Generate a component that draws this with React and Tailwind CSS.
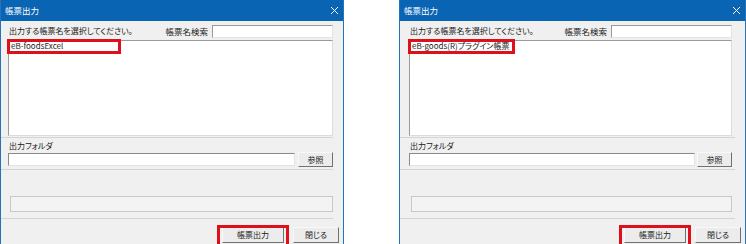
import React from "react";

const font = { fontFamily: '"Noto Sans CJK JP", "Noto Sans", sans-serif' };

function Dialog({ width, item, itemBoxW, folderW, padL, padR }) {
  return (
    <div
      className="flex flex-col h-[244px] bg-[#f0f0f0] border-l border-r border-[#2a72b8] [font-feature-settings:'palt'] text-[8px] leading-none text-[#1a1a1a]"
      style={{ ...font, width }}
    >
      <div className="h-[21px] bg-[#0a64b4] flex items-center justify-between pl-[4px] pr-[4px] text-white shrink-0">
        <span className="text-[8.5px]">帳票出力</span>
        <svg width="9" height="9" viewBox="0 0 9 9">
          <path d="M1 1 L8 8 M8 1 L1 8" stroke="white" strokeWidth="1" />
        </svg>
      </div>
      <div className="flex flex-col" style={{ paddingLeft: padL, paddingRight: padR }}>
        <div className="flex items-center justify-between mt-[3px] h-[14px]">
          <span className="pl-[1px]">出力する帳票名を選択してください。</span>
          <div className="flex items-center gap-[4px]">
            <span className="text-[8.5px]">帳票名検索</span>
            <div className="w-[121px] h-[13px] bg-white border border-[#9a9a9a] border-b-[#e3e3e3] border-r-[#e3e3e3]" />
          </div>
        </div>
        <div className="relative mt-[2px] h-[96px] bg-white border border-[#9a9a9a] border-b-[#dcdcdc] border-r-[#dcdcdc]">
          <div className="pl-[2px] h-[9px] leading-[9px] whitespace-nowrap">{item}</div>
          <div
            className="absolute left-[-2px] top-[-2px] h-[15px] border-[3px] border-[#e0101a]"
            style={{ width: itemBoxW }}
          />
        </div>
      </div>
      <div className="h-px bg-[#d4d4d4] mt-[1px] mr-[10px]" />
      <div className="flex flex-col" style={{ paddingLeft: padL, paddingRight: padR }}>
        <span className="mt-[4px] pl-[1px]">出力フォルダ</span>
        <div className="flex items-center justify-between mt-[2px]">
          <div
            className="h-[13px] bg-white border border-[#8a8a8a] border-b-[#e3e3e3] border-r-[#e3e3e3]"
            style={{ width: folderW }}
          />
          <div className="w-[35px] h-[15px] bg-[#ececec] border border-[#f8f8f8] border-b-[#707070] border-r-[#707070] flex items-center justify-center">
            参照
          </div>
        </div>
      </div>
      <div className="h-px bg-[#d4d4d4] mt-[2px] mr-[10px]" />
      <div className="flex flex-col" style={{ paddingLeft: padL, paddingRight: padR }}>
        <div className="mt-[26px] ml-[2px] h-[16px] border border-[#c8c8c8] bg-[#f3f3f3]" />
      </div>
      <div className="h-px bg-[#d4d4d4] mt-[6px] mr-[10px]" />
      <div className="flex justify-end items-start gap-[4px] pr-[4px] mt-[6px]">
        <div className="relative">
          <div className="w-[62px] h-[16px] bg-[#ececec] border border-[#f8f8f8] border-b-[#707070] border-r-[#707070] flex items-center justify-center mt-[2px] mx-[5px]">
            帳票出力
          </div>
          <div className="absolute left-0 top-0 w-[72px] h-[24px] border-[3px] border-[#e0101a]" />
        </div>
        <div className="w-[46px] h-[16px] bg-[#ececec] border border-[#f8f8f8] border-b-[#707070] border-r-[#707070] flex items-center justify-center mt-[2px]">
          閉じる
        </div>
      </div>
    </div>
  );
}

export default function App() {
  return (
    <div className="w-[746px] h-[244px] bg-white flex justify-between overflow-hidden">
      <Dialog width={344} item="eB-foodsExcel" itemBoxW={114} folderW={287} padL={7} padR={10} />
      <Dialog width={347} item="eB-goods(R)プラグイン帳票" itemBoxW={107} folderW={286} padL={9} padR={13} />
    </div>
  );
}
